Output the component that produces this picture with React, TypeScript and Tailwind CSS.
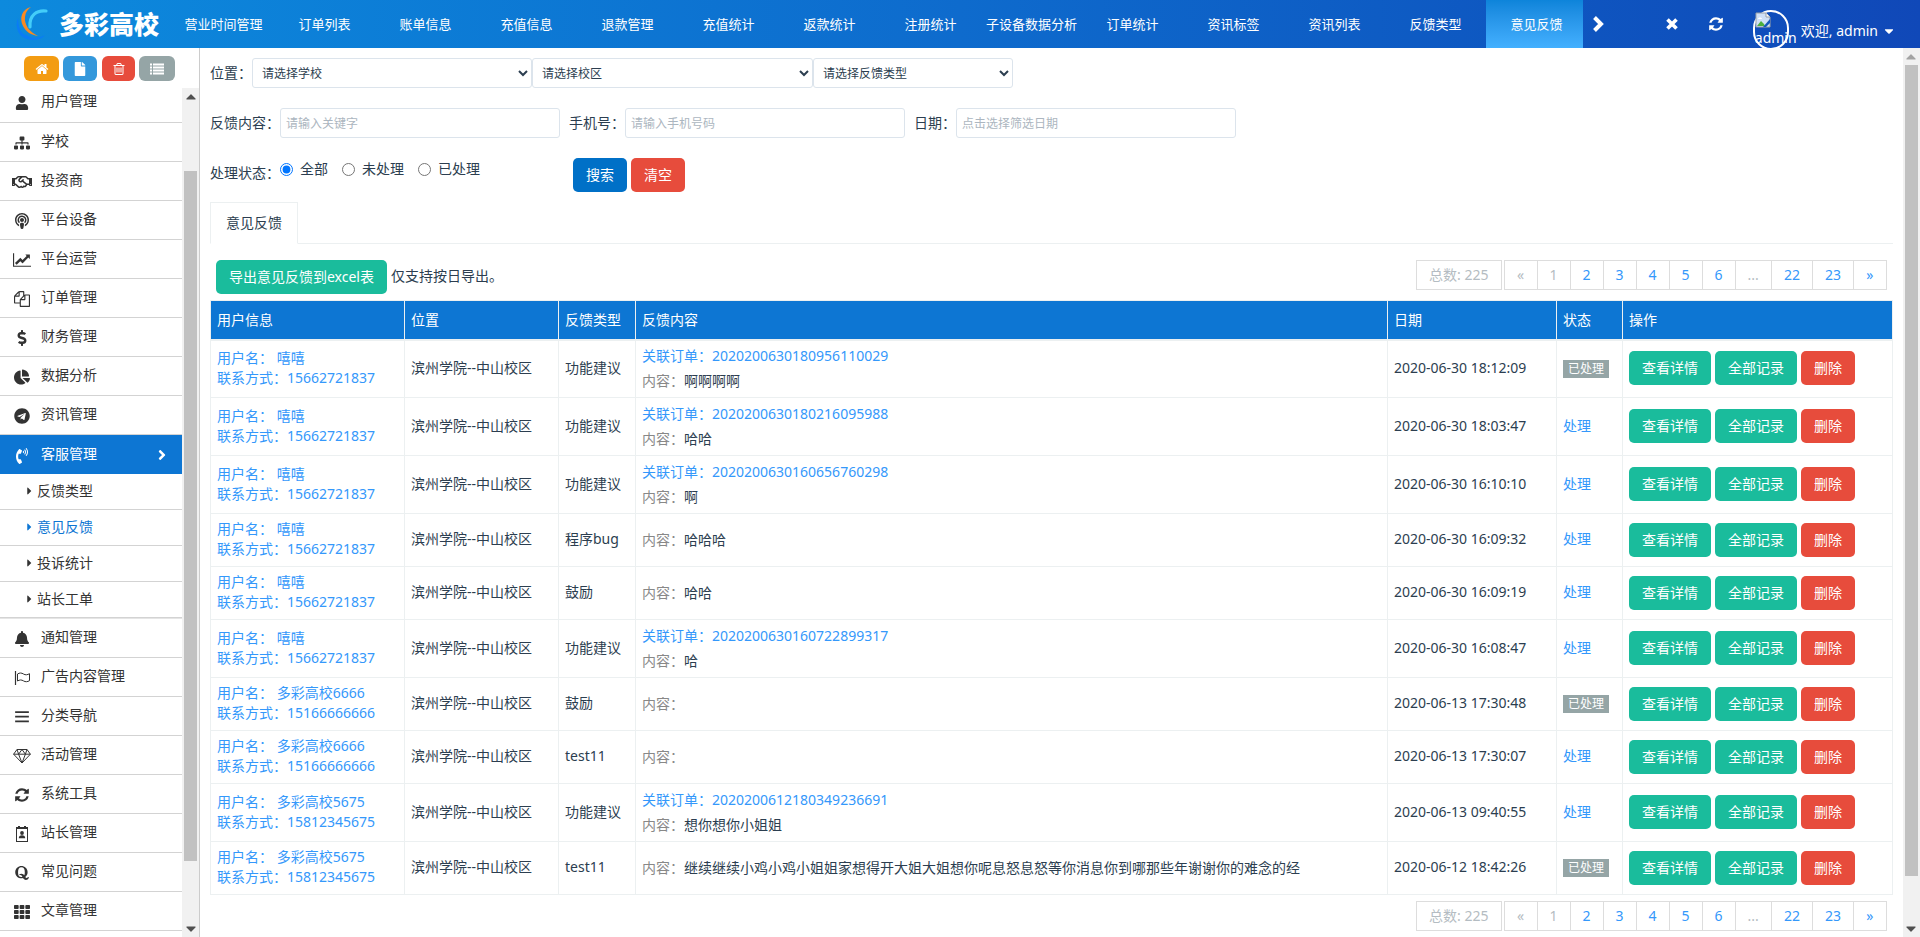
import React, { useState } from "react";
import {
  FaAngleRight,
  FaBell,
  FaCaretDown,
  FaCaretRight,
  FaCaretUp,
  FaChartPie,
  FaDollarSign,
  FaFile,
  FaPhoneVolume,
  FaPodcast,
  FaQuora,
  FaRegHandshake,
  FaSitemap,
  FaTelegram,
  FaTh,
  FaUser,
} from "react-icons/fa";

// One feedback record as listed in the table
interface IFeedback {
  id: number;
  user: string;
  phone: string;
  type: string;
  order?: string; // Related order number, not every feedback has one
  content: string;
  date: string;
  done: boolean; // true once the feedback has been handled
}

interface IGlyph {
  d: string;
  wide?: boolean;
  className?: string;
}

// Solid glyph drawn on a 1792 unit grid (2048 units wide for the wide ones)
function Glyph({ d, wide, className }: IGlyph) {
  return (
    <svg viewBox={wide ? "0 0 2048 1792" : "0 0 1792 1792"} className={className} fill="currentColor" aria-hidden="true">
      <path d={d} fillRule="evenodd" />
    </svg>
  );
}

const HOME =
  "M1472 992v480q0 26-19 45t-45 19h-384v-384h-256v384h-384q-26 0-45-19t-19-45v-480q0-1 .5-3t.5-3l575-474 575 474q1 2 1 6zm223-69l-62 74q-8 9-21 11h-3q-13 0-21-7l-692-577-692 577q-12 8-24 7-13-2-21-11l-62-74q-8-10-7-23.5t11-21.5l719-599q32-26 76-26t76 26l244 204v-195q0-14 9-23t23-9h192q14 0 23 9t9 23v408l219 182q10 8 11 21.5t-7 23.5z";
const TRASH =
  "M704 736v576q0 14-9 23t-23 9h-64q-14 0-23-9t-9-23v-576q0-14 9-23t23-9h64q14 0 23 9t9 23zm256 0v576q0 14-9 23t-23 9h-64q-14 0-23-9t-9-23v-576q0-14 9-23t23-9h64q14 0 23 9t9 23zm256 0v576q0 14-9 23t-23 9h-64q-14 0-23-9t-9-23v-576q0-14 9-23t23-9h64q14 0 23 9t9 23zm128 724v-948h-896v948q0 22 7 40.5t14.5 27 10.5 8.5h832q3 0 10.5-8.5t14.5-27 7-40.5zm-672-1076h448l-48-117q-7-9-17-11h-317q-10 2-17 11zm928 32v64q0 14-9 23t-23 9h-96v948q0 83-47 143.5t-113 60.5h-832q-66 0-113-58.5t-47-141.5v-952h-96q-14 0-23-9t-9-23v-64q0-14 9-23t23-9h309l70-167q15-37 54-63t79-26h320q40 0 79 26t54 63l70 167h309q14 0 23 9t9 23z";
const REFRESH =
  "M1639 1056q0 5-1 7-64 268-268 434.5t-478 166.5q-146 0-282.5-55t-243.5-157l-129 129q-19 19-45 19t-45-19-19-45v-448q0-26 19-45t45-19h448q26 0 45 19t19 45-19 45l-137 137q71 66 161 102t187 36q134 0 250-65t186-179q11-17 53-117 8-23 30-23h192q13 0 22.5 9.5t9.5 22.5zm25-800v448q0 26-19 45t-45 19h-448q-26 0-45-19t-19-45 19-45l138-138q-148-137-349-137-134 0-250 65t-186 179q-11 17-53 117-8 23-30 23h-199q-13 0-22.5-9.5t-9.5-22.5v-7q65-268 270-434.5t480-166.5q146 0 284 55.5t245 156.5l130-129q19-19 45-19t45 19 19 45z";
const LINE_CHART =
  "M2048 1536v128h-2048v-1536h128v1408h1920zm-128-1248v435q0 21-19.5 29.5t-35.5-7.5l-121-121-633 633q-10 10-23 10t-23-10l-233-233-416 416-192-192 585-585q10-10 23-10t23 10l233 233 464-464-121-121q-16-16-7.5-35.5t29.5-19.5h435q14 0 23 9t9 23z";
const FILES =
  "M1696 384q40 0 68 28t28 68v1216q0 40-28 68t-68 28h-960q-40 0-68-28t-28-68v-288h-544q-40 0-68-28t-28-68v-672q0-40 20-88t48-76l408-408q28-28 76-48t88-20h416q40 0 68 28t28 68v328q68-40 128-40h416zm-544 213l-299 299h299v-299zm-640-384l-299 299h299v-299zm196 647l316-316v-416h-384v416q0 40-28 68t-68 28h-416v640h512v-256q0-40 20-88t48-76zm956 804v-1152h-384v416q0 40-28 68t-68 28h-416v640h896z";
const BARS = "M128 256h1536v192h-1536zM128 768h1536v192h-1536zM128 1280h1536v192h-1536z";
const LIST =
  "M0 192h256v256h-256zM384 192h1408v256h-1408zM0 576h256v256h-256zM384 576h1408v256h-1408zM0 960h256v256h-256zM384 960h1408v256h-1408zM0 1344h256v256h-256zM384 1344h1408v256h-1408z";

function BadgeIcon() {
  return (
    <svg viewBox="0 0 12 16" className="w-3 h-4" fill="currentColor" aria-hidden="true">
      <path d="M0 1h2V0h2v1h4V0h2v1h2v15H0zM1 3v12h10V3z" fillRule="evenodd" />
      <circle cx="6" cy="7" r="1.9" />
      <path d="M2.8 12.2c0-2 1-3 3.2-3s3.2 1 3.2 3z" />
    </svg>
  );
}

function DiamondIcon() {
  return (
    <svg viewBox="0 0 18 16" className="w-[18px] h-4" fill="none" stroke="currentColor" strokeLinejoin="round" aria-hidden="true">
      <path d="M4 1.5h10l3.4 4.7L9 15 .6 6.2zM.6 6.2h16.8M5.6 6.2L9 15l3.4-8.8M4 1.5l1.6 4.7L9 1.5l3.4 4.7L14 1.5" />
    </svg>
  );
}

function FlagIcon() {
  return (
    <svg viewBox="0 0 16 16" className="size-4" fill="none" stroke="currentColor" aria-hidden="true">
      <path d="M1.5 1v14" strokeWidth="1.2" />
      <path d="M3.5 4c2-1.3 4-1.3 6 0s4 .8 6-.3v7c-2 1.1-4 1.5-6 .2s-4-1.2-6 .1z" />
    </svg>
  );
}

const tabs = [
  "营业时间管理", "订单列表", "账单信息", "充值信息", "退款管理", "充值统计", "返款统计",
  "注册统计", "子设备数据分析", "订单统计", "资讯标签", "资讯列表", "反馈类型", "意见反馈",
];

const menu = [
  { name: "用户管理", icon: <FaUser className="size-3.5" /> },
  { name: "学校", icon: <FaSitemap className="size-4" /> },
  { name: "投资商", icon: <FaRegHandshake className="size-5" /> },
  { name: "平台设备", icon: <FaPodcast className="size-4" /> },
  { name: "平台运营", icon: <Glyph d={LINE_CHART} wide className="w-[18px] h-4" /> },
  { name: "订单管理", icon: <Glyph d={FILES} className="size-4" /> },
  { name: "财务管理", icon: <FaDollarSign className="size-4" /> },
  { name: "数据分析", icon: <FaChartPie className="size-4" /> },
  { name: "资讯管理", icon: <FaTelegram className="size-4" /> },
  { name: "客服管理", icon: <FaPhoneVolume className="size-4" />, children: ["反馈类型", "意见反馈", "投诉统计", "站长工单"] },
  { name: "通知管理", icon: <FaBell className="size-4" /> },
  { name: "广告内容管理", icon: <FlagIcon /> },
  { name: "分类导航", icon: <Glyph d={BARS} className="size-4" /> },
  { name: "活动管理", icon: <DiamondIcon /> },
  { name: "系统工具", icon: <Glyph d={REFRESH} className="size-4" /> },
  { name: "站长管理", icon: <BadgeIcon /> },
  { name: "常见问题", icon: <FaQuora className="size-4" /> },
  { name: "文章管理", icon: <FaTh className="size-4" /> },
];

const rows: IFeedback[] = [
  { id: 1, user: "嘻嘻", phone: "15662721837", type: "功能建议", order: "2020200630180956110029", content: "啊啊啊啊", date: "2020-06-30 18:12:09", done: true },
  { id: 2, user: "嘻嘻", phone: "15662721837", type: "功能建议", order: "2020200630180216095988", content: "哈哈", date: "2020-06-30 18:03:47", done: false },
  { id: 3, user: "嘻嘻", phone: "15662721837", type: "功能建议", order: "2020200630160656760298", content: "啊", date: "2020-06-30 16:10:10", done: false },
  { id: 4, user: "嘻嘻", phone: "15662721837", type: "程序bug", content: "哈哈哈", date: "2020-06-30 16:09:32", done: false },
  { id: 5, user: "嘻嘻", phone: "15662721837", type: "鼓励", content: "哈哈", date: "2020-06-30 16:09:19", done: false },
  { id: 6, user: "嘻嘻", phone: "15662721837", type: "功能建议", order: "2020200630160722899317", content: "哈", date: "2020-06-30 16:08:47", done: false },
  { id: 7, user: "多彩高校6666", phone: "15166666666", type: "鼓励", content: "", date: "2020-06-13 17:30:48", done: true },
  { id: 8, user: "多彩高校6666", phone: "15166666666", type: "test11", content: "", date: "2020-06-13 17:30:07", done: false },
  { id: 9, user: "多彩高校5675", phone: "15812345675", type: "功能建议", order: "2020200612180349236691", content: "想你想你小姐姐", date: "2020-06-13 09:40:55", done: false },
  { id: 10, user: "多彩高校5675", phone: "15812345675", type: "test11", content: "继续继续小鸡小鸡小姐姐家想得开大姐大姐想你呢息怒息怒等你消息你到哪那些年谢谢你的难念的经", date: "2020-06-12 18:42:26", done: true },
];

function Header() {
  return (
    <header className="flex h-12 shrink-0 overflow-hidden bg-linear-to-r from-[#0d8add] via-[#0e6bcd] to-[#1048b8] text-white">
      {/* Brand */}
      <a href="#" className="flex w-[173px] shrink-0 items-center pl-[15px]">
        <svg viewBox="0 0 34 36" className="w-[34px] h-9" fill="none" aria-hidden="true">
          <path d="M3 12C-1 22 4 33 16 34c6 .5 11-1 14-5-5 3-13 4-18 0C6 29 3 21 3 12z" fill="#0a7cf5" />
          <path d="M16 1C7 3 4 12 8 20c3 6 8 9 15 10C14 26 9 18 10 11c.5-5 3-8 6-10z" fill="#f98a22" />
          <path d="M31 5C22 4 14 9 15 21" stroke="#43cdf9" strokeWidth="3.2" strokeLinecap="round" />
        </svg>
        <span className="ml-2.5 whitespace-nowrap text-[25px] leading-none font-black">多彩高校</span>
      </a>
      {/* Opened pages */}
      <nav className="flex gap-1">
        {tabs.map((tab) => (
          <a
            key={tab}
            href="#"
            className={
              tab === "意见反馈"
                ? "flex w-[97px] items-center justify-center whitespace-nowrap bg-linear-to-b from-[#0d84da] to-[#43b0ff] pl-1 text-[13px]"
                : "flex w-[97px] items-center justify-center whitespace-nowrap pl-1 text-[13px]"
            }
          >
            {tab}
          </a>
        ))}
      </nav>
      <button type="button" aria-label="下一页" className="ml-[7px] flex w-4 items-center justify-center">
        <svg viewBox="0 0 12 16" className="h-4 w-3" fill="none" stroke="currentColor" strokeWidth="4" aria-hidden="true">
          <path d="M2.5 1.5L9 8l-6.5 6.5" />
        </svg>
      </button>
      <div className="ml-auto flex items-center pr-6">
        <button type="button" aria-label="关闭" className="flex w-4 justify-center">
          <svg viewBox="0 0 12 12" className="size-3" fill="none" stroke="currentColor" strokeWidth="3.6" aria-hidden="true">
            <path d="M1.5 1.5l9 9M10.5 1.5l-9 9" />
          </svg>
        </button>
        <button type="button" aria-label="刷新" className="ml-7 flex w-4 justify-center">
          <Glyph d={REFRESH} className="size-4 shrink-0" />
        </button>
        {/* Avatar whose picture is missing, so the placeholder and its alt text show */}
        <a href="#" className="ml-[29px] flex h-12 items-start whitespace-nowrap pt-2.5">
          <span className="h-10 w-9 rounded-full border-2 border-white">
            <svg viewBox="0 0 16 16" className="size-4" aria-hidden="true">
              <path d="M1 1h10l4 4v10H1z" fill="#cfe0f7" stroke="#9aa0a6" />
              <path d="M11 1v4h4" fill="#fff" stroke="#9aa0a6" />
              <path d="M3 7c0-2 4-2 4 0z" fill="#fff" />
              <path d="M2 14l4-5 3 3 1 2z" fill="#4caf3d" />
              <path d="M15 7l-7 8h3l4-4z" fill="#1358bd" />
            </svg>
            <span className="block text-sm leading-5">admin</span>
          </span>
          <span className="ml-3 flex items-center gap-1 pt-[11px] text-sm leading-5">
            欢迎, admin <FaCaretDown className="size-3.5" />
          </span>
        </a>
      </div>
    </header>
  );
}

// Vertical scrollbar, before and after are the empty shares of the track
function ScrollBar({ before, thumb, after }: { before: number; thumb: number; after: number }) {
  return (
    <div className="flex w-[17px] shrink-0 flex-col items-center bg-[#f1f1f1] text-[#505050]">
      <FaCaretUp className={before ? "h-[17px] w-2.5 shrink-0" : "h-[17px] w-2.5 shrink-0 text-[#a3a3a3]"} />
      <div style={{ flexGrow: before }} />
      <div className="w-[13px] bg-[#c1c1c1]" style={{ flexGrow: thumb }} />
      <div style={{ flexGrow: after }} />
      <FaCaretDown className="h-[17px] w-2.5 shrink-0" />
    </div>
  );
}

function Sidebar() {
  return (
    <aside className="flex w-[200px] shrink-0 flex-col border-r border-[#ccc] text-[#333]">
      <div className="flex h-10 shrink-0 items-start gap-1 pl-6 pt-2 text-white">
        <button type="button" aria-label="首页" className="flex h-[25px] w-[35px] items-center justify-center rounded-md bg-[#f39c12]">
          <Glyph d={HOME} className="size-3.5" />
        </button>
        <button type="button" aria-label="新建" className="flex h-[25px] w-[34px] items-center justify-center rounded-md bg-[#3498db]">
          <FaFile className="size-3.5" />
        </button>
        <button type="button" aria-label="删除" className="ml-px flex h-[25px] w-[33px] items-center justify-center rounded-md bg-[#e74c3c]">
          <Glyph d={TRASH} className="size-3.5" />
        </button>
        <button type="button" aria-label="列表" className="flex h-[25px] w-[36px] items-center justify-center rounded-md bg-[#95a5a6]">
          <Glyph d={LIST} className="w-4 h-3.5" />
        </button>
      </div>
      <div className="flex min-h-0 grow">
        {/* The list is scrolled a little, its first entry is cut at the top */}
        <ul className="flex min-w-0 grow flex-col overflow-hidden text-sm">
          {menu.map((item, i) => (
            <li key={item.name} className="shrink-0">
              <a
                href="#"
                className={
                  item.children
                    ? "flex h-[39px] items-center bg-[#0d76d3] text-white"
                    : i === 0
                      ? "flex h-[35px] items-center border-b border-[#d3d3d3] pb-1.5"
                      : "flex h-[39px] items-center border-b border-[#d3d3d3]"
                }
              >
                <span className="ml-2 flex w-7 justify-center pt-0.5">{item.icon}</span>
                <span className="ml-[5px] pb-0.5">{item.name}</span>
                {item.children && <FaAngleRight className="ml-auto mr-3 size-4" />}
              </a>
              {item.children && (
                <ul className="border-b border-[#e5e5e5]">
                  {item.children.map((child) => (
                    <li key={child} className="border-b border-[#d3d3d3]">
                      <a
                        href="#"
                        className={
                          child === "意见反馈"
                            ? "flex h-[35px] items-center gap-1 pb-0.5 pl-[26px] text-[#0d76d3]"
                            : "flex h-[35px] items-center gap-1 pb-0.5 pl-[26px]"
                        }
                      >
                        <FaCaretRight className="h-3 w-[7px]" />
                        {child}
                      </a>
                    </li>
                  ))}
                </ul>
              )}
            </li>
          ))}
        </ul>
        <ScrollBar before={66} thumb={690} after={59} />
      </div>
    </aside>
  );
}

function Select({ label, text, className }: { label: string; text: string; className: string }) {
  return (
    <select aria-label={label} className={`${className} h-[30px] rounded-[3px] border border-[#dce4ec] bg-white pl-[5px] text-xs text-[#2c3e50]`}>
      <option>{text}</option>
    </select>
  );
}

function Filters() {
  const [status, setStatus] = useState("全部");
  const input = "h-[30px] w-[280px] rounded-[3px] border border-[#dce4ec] px-[5px] text-xs placeholder:text-[#acb6c0]";

  return (
    <form className="flex flex-col gap-5" onSubmit={(e) => e.preventDefault()}>
      <div className="flex items-center">
        <span className="w-[42px]">位置：</span>
        <Select label="学校" text="请选择学校" className="w-[280px]" />
        <Select label="校区" text="请选择校区" className="w-[281px]" />
        <Select label="反馈类型" text="请选择反馈类型" className="w-[200px]" />
      </div>
      <div className="flex items-center">
        <label htmlFor="content">反馈内容：</label>
        <input id="content" className={input} placeholder="请输入关键字" />
        <label htmlFor="phone" className="ml-[9px]">手机号：</label>
        <input id="phone" className={input} placeholder="请输入手机号码" />
        <label htmlFor="date" className="ml-[9px]">日期：</label>
        <input id="date" className={input} placeholder="点击选择筛选日期" />
      </div>
      <div className="flex h-[34px] items-start">
        <span className="pt-[5px]">处理状态：</span>
        <div className="flex w-[293px] gap-3.5 pt-px">
          {["全部", "未处理", "已处理"].map((name) => (
            <label key={name} className="flex items-center gap-[7px]">
              <input
                type="radio"
                name="status"
                className="size-[13px]"
                checked={status === name}
                onChange={() => setStatus(name)}
              />
              {name}
            </label>
          ))}
        </div>
        <button type="submit" className="h-[34px] rounded-[5px] bg-[#0070c7] px-[13px] text-white">搜索</button>
        <button type="reset" className="ml-1 h-[34px] rounded-[5px] bg-[#e74c3c] px-[13px] text-white">清空</button>
      </div>
    </form>
  );
}

function Pagination() {
  const pages = ["«", "1", "2", "3", "4", "5", "6", "...", "22", "23", "»"];

  return (
    <div className="flex justify-end gap-0.5 pr-1.5 leading-7">
      <span className="border border-[#ddd] px-3 text-[#b4bcc2]">总数: 225</span>
      <nav className="flex border-y border-r border-[#ddd]">
        {pages.map((page) =>
          ["«", "1", "..."].includes(page) ? (
            <span key={page} className="min-w-[33px] border-l border-[#ddd] px-3 text-center text-[#b4bcc2]">{page}</span>
          ) : (
            <a key={page} href="#" className="min-w-[33px] border-l border-[#ddd] px-3 text-center text-[#3498fb]">{page}</a>
          )
        )}
      </nav>
    </div>
  );
}

function FeedbackTable() {
  const action = "mr-1 h-[34px] rounded-[5px] px-[13px] text-white";

  return (
    <table className="w-full table-fixed border-collapse border border-[#ecf0f1] text-left leading-5">
      <colgroup>
        <col className="w-[194px]" />
        <col className="w-[154px]" />
        <col className="w-[77px]" />
        <col />
        <col className="w-[169px]" />
        <col className="w-[66px]" />
        <col className="w-[270px]" />
      </colgroup>
      <thead>
        <tr className="h-[39px] border-b-2 border-[#ecf0f1] bg-[#0d76d3] text-white">
          {["用户信息", "位置", "反馈类型", "反馈内容", "日期", "状态", "操作"].map((name) => (
            <th key={name} className="border-x border-[#ecf0f1] px-1.5 font-normal">{name}</th>
          ))}
        </tr>
      </thead>
      <tbody>
        {rows.map((row) => (
          <tr key={row.id} className={row.order ? "h-[58px] border-b border-[#ecf0f1]" : "h-[53px] border-b border-[#ecf0f1]"}>
            <td className="border-x border-[#ecf0f1] px-1.5 pb-0.5">
              <a href="#" className="text-[#3498fb]">
                用户名： {row.user}
                <br />
                联系方式：{row.phone}
              </a>
            </td>
            <td className="border-x border-[#ecf0f1] px-1.5 pb-0.5">滨州学院--中山校区</td>
            <td className="whitespace-nowrap border-x border-[#ecf0f1] px-1.5 pb-0.5">{row.type}</td>
            <td className="border-x border-[#ecf0f1] px-1.5">
              {row.order && <a href="#" className="mb-[5px] block text-[#3498fb]">关联订单：{row.order}</a>}
              <span className="text-[#888]">内容：</span>
              {row.content}
            </td>
            <td className="whitespace-nowrap border-x border-[#ecf0f1] px-1.5 pb-0.5">{row.date}</td>
            <td className="border-x border-[#ecf0f1] px-1.5 pb-0.5">
              {row.done ? (
                <span className="inline-block whitespace-nowrap bg-[#95a5a6] px-[5px] align-middle text-xs leading-[18px] text-white">已处理</span>
              ) : (
                <a href="#" className="text-[#3498fb]">处理</a>
              )}
            </td>
            <td className="whitespace-nowrap border-x border-[#ecf0f1] px-1.5 pb-px">
              <div className="flex">
                <button type="button" className={`${action} bg-[#1abc9c]`}>查看详情</button>
                <button type="button" className={`${action} bg-[#1abc9c]`}>全部记录</button>
                <button type="button" className={`${action} bg-[#e74c3c]`}>删除</button>
              </div>
            </td>
          </tr>
        ))}
      </tbody>
    </table>
  );
}

function App() {
  return (
    <div className="flex h-screen flex-col overflow-hidden bg-white font-['Noto_Sans','Noto_Sans_CJK_SC',sans-serif] text-sm text-[#2c3e50]">
      <Header />
      <div className="flex min-h-0 grow">
        <Sidebar />
        <main className="min-w-0 grow overflow-hidden px-2.5 pt-2.5">
          <Filters />
          {/* Tab strip, the active tab covers the line below it */}
          <div className="mt-2.5 flex border-b border-[#ecf0f1]">
            <button type="button" className="-mb-px h-[42px] border border-b-white border-[#ecf0f1] px-[15px]">意见反馈</button>
          </div>
          <div className="mb-1.5 mt-4 flex items-start pl-1.5">
            <button type="button" className="h-[34px] rounded-[5px] bg-[#1abc9c] px-[13px] text-white">导出意见反馈到excel表</button>
            <span className="ml-1 pt-1.5">仅支持按日导出。</span>
            <div className="ml-auto">
              <Pagination />
            </div>
          </div>
          <FeedbackTable />
          <div className="mt-1.5">
            <Pagination />
          </div>
        </main>
        <ScrollBar before={0} thumb={811} after={44} />
      </div>
    </div>
  );
}

export default App;
